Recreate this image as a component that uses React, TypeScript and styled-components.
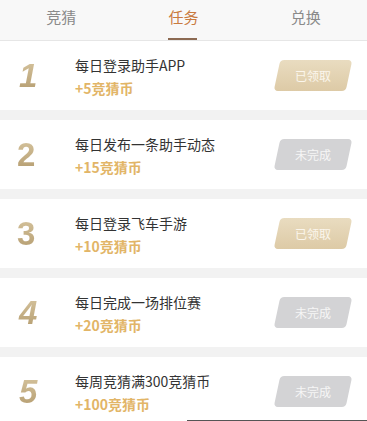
import React from "react";
import styled, { createGlobalStyle } from "styled-components";

const GlobalStyle = createGlobalStyle`
  html, body {
    margin: 0;
    padding: 0;
    background: #f2f2f2;
  }
  body {
    font-family: "Noto Sans CJK SC", "Liberation Sans", sans-serif;
  }
`;

type Status = "claimed" | "todo";

interface TaskType {
  id: number;
  title: string;
  reward: string;
  status: Status;
  italic: boolean;
}

const tasks: TaskType[] = [
  { id: 1, title: "每日登录助手APP", reward: "+5竞猜币", status: "claimed", italic: true },
  { id: 2, title: "每日发布一条助手动态", reward: "+15竞猜币", status: "todo", italic: false },
  { id: 3, title: "每日登录飞车手游", reward: "+10竞猜币", status: "claimed", italic: false },
  { id: 4, title: "每日完成一场排位赛", reward: "+20竞猜币", status: "todo", italic: true },
  { id: 5, title: "每周竞猜满300竞猜币", reward: "+100竞猜币", status: "todo", italic: true },
];

const Page = styled.div`
  position: relative;
  width: 367px;
  height: 421px;
  overflow: hidden;
  background: #f2f2f2;
`;

const TabBar = styled.div`
  display: grid;
  grid-template-columns: 1fr 1fr 1fr;
  height: 40px;
  background: #f8f8f8;
  border-bottom: 1px solid #e6e6e6;
`;

const Tab = styled.div<{ $active?: boolean }>`
  position: relative;
  display: flex;
  justify-content: center;
  padding-top: 6px;
  font-size: 15px;
  line-height: 22px;
  color: ${(p) => (p.$active ? "#c97a3f" : "#8a8a8a")};
`;

const Underline = styled.span`
  position: absolute;
  bottom: 0;
  left: 50%;
  width: 29px;
  height: 2px;
  margin-left: -15px;
  background: #8c6a52;
`;

const List = styled.div`
  display: flex;
  flex-direction: column;
  gap: 10px;
`;

const Row = styled.div`
  display: flex;
  align-items: center;
  height: 69px;
  background: #ffffff;
  padding: 0 18px 0 16px;
`;

const Rank = styled.div<{ $italic: boolean }>`
  flex: 0 0 59px;
  box-sizing: border-box;
  padding-left: ${(p) => (p.$italic ? "3px" : "1px")};
  font-family: "Liberation Sans", Arial, sans-serif;
  font-size: 33px;
  font-weight: 700;
  font-style: ${(p) => (p.$italic ? "italic" : "normal")};
  line-height: 1;
  background: linear-gradient(180deg, #d6c49e 0%, #b59d70 100%);
  -webkit-background-clip: text;
  background-clip: text;
  color: transparent;
`;

const Info = styled.div`
  flex: 1;
  display: flex;
  flex-direction: column;
  gap: 3px;
  margin-top: 1px;
`;

const Title = styled.div`
  font-size: 14px;
  line-height: 20px;
  color: #333333;
`;

const Reward = styled.div`
  font-size: 14px;
  line-height: 20px;
  font-weight: 700;
  color: #e2b567;
`;

const ActionButton = styled.div<{ $status: Status }>`
  display: flex;
  align-items: center;
  justify-content: center;
  width: 72px;
  height: 31px;
  border-radius: 4px;
  transform: skewX(-12deg);
  background: ${(p) =>
    p.$status === "claimed"
      ? "linear-gradient(180deg, #e9dcc0 0%, #ddcaa6 100%)"
      : "#d3d3d5"};
  color: ${(p) => (p.$status === "claimed" ? "#fbf6ec" : "#f6f6f6")};
  font-size: 12px;
  span {
    display: block;
    transform: skewX(12deg);
  }
`;

const BottomLine = styled.div`
  position: absolute;
  right: 0;
  bottom: 0;
  width: 180px;
  height: 1px;
  background: #555555;
`;

const TaskRow = ({ task }: { task: TaskType }) => (
  <Row>
    <Rank $italic={task.italic}>{task.id}</Rank>
    <Info>
      <Title>{task.title}</Title>
      <Reward>{task.reward}</Reward>
    </Info>
    <ActionButton $status={task.status}>
      <span>{task.status === "claimed" ? "已领取" : "未完成"}</span>
    </ActionButton>
  </Row>
);

const App = () => {
  return (
    <Page>
      <GlobalStyle />
      <TabBar>
        <Tab>竞猜</Tab>
        <Tab $active>
          任务
          <Underline />
        </Tab>
        <Tab>兑换</Tab>
      </TabBar>
      <List>
        {tasks.map((t) => (
          <TaskRow key={t.id} task={t} />
        ))}
      </List>
      <BottomLine />
    </Page>
  );
};

export default App;
